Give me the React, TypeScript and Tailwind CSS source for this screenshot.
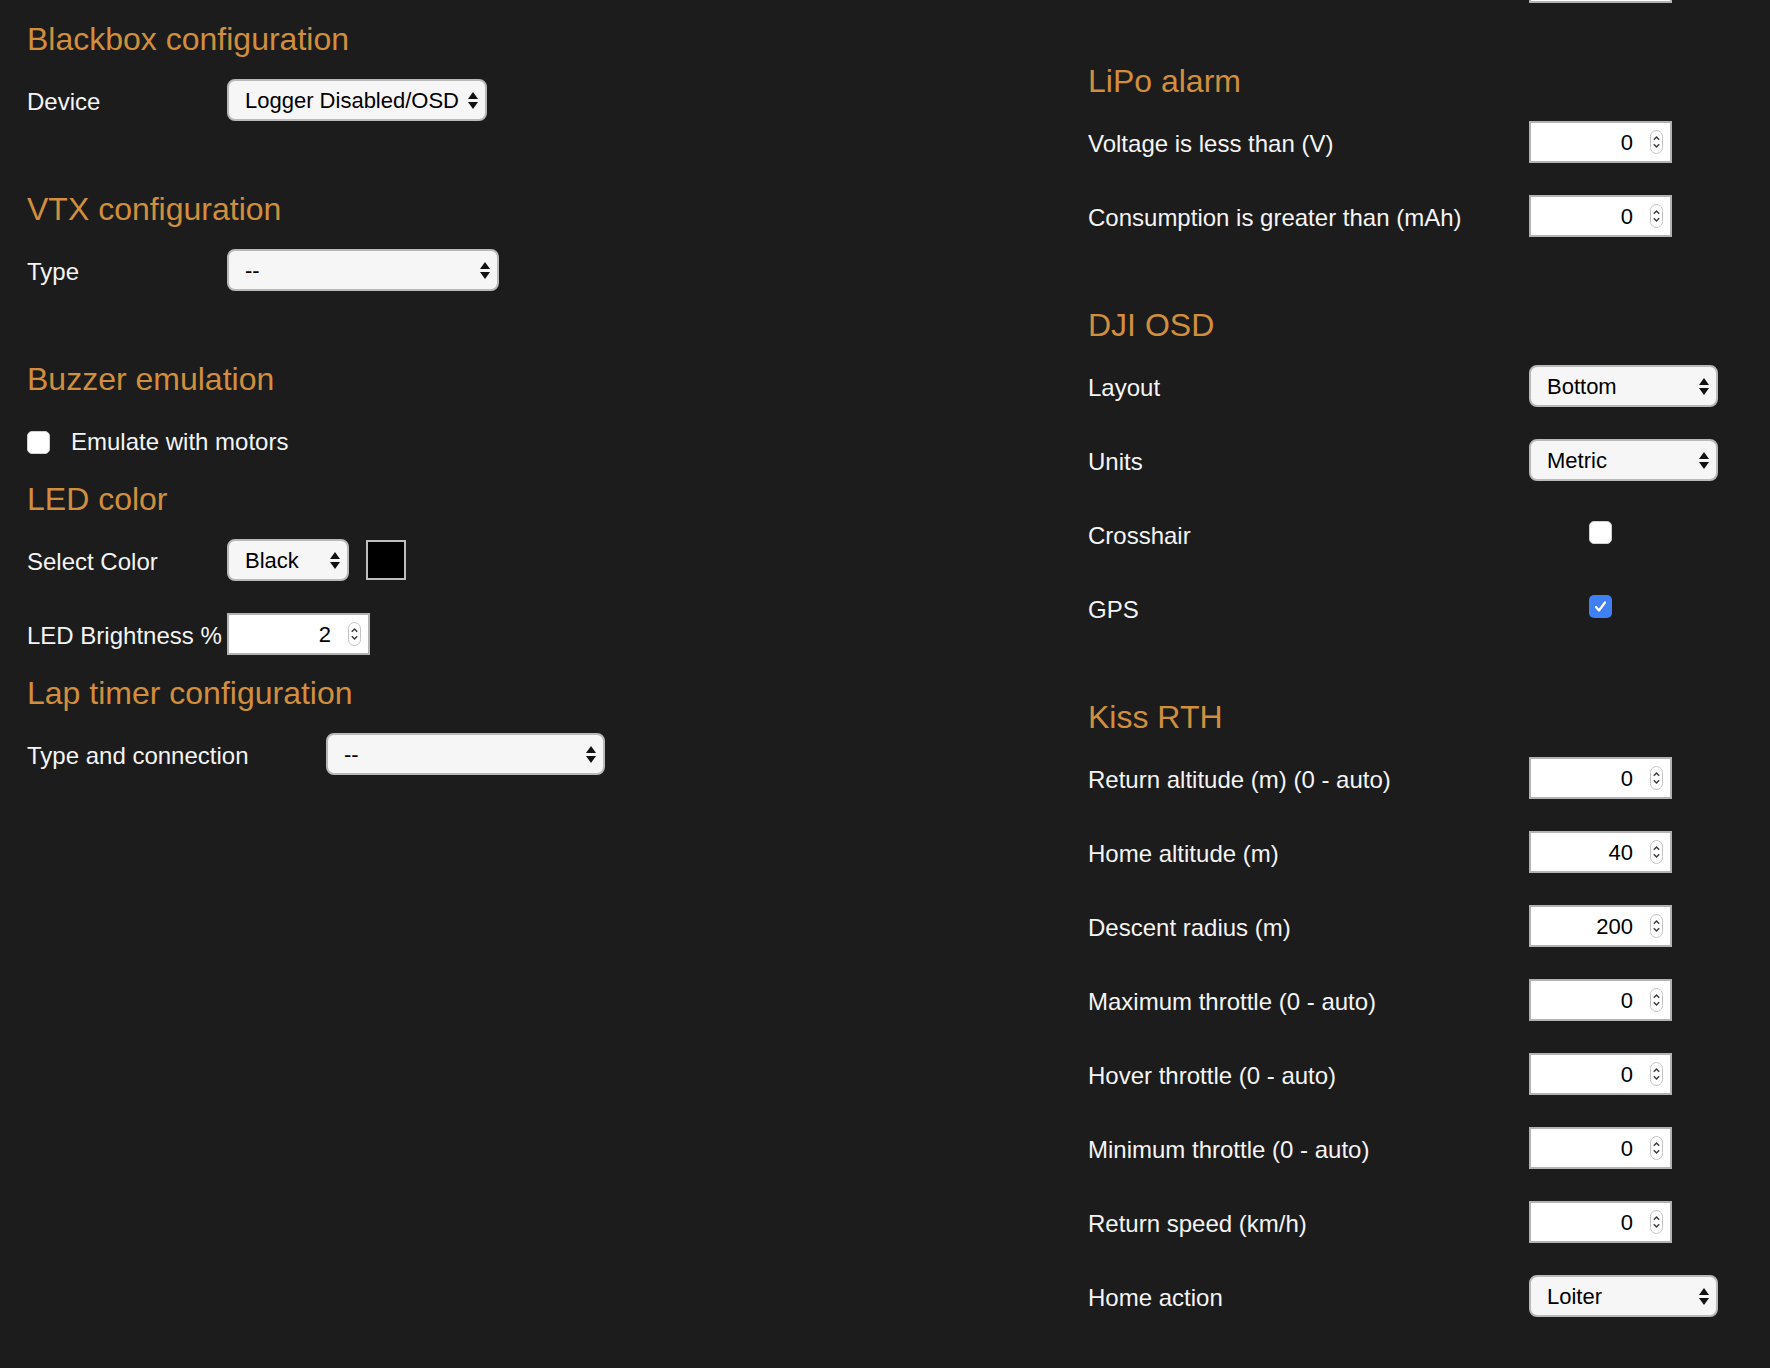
import React from 'react'

const FONT = "font-['Liberation_Sans',Arial,sans-serif]"

type Row =
    | { kind: 'select', label: string, value: string, width: string }
    | { kind: 'number', label: string, value: string }
    | { kind: 'check', label: string, checked: boolean }

const Heading = ({ children }: { children: React.ReactNode }) => (
    <h2 className='text-[32px] leading-[30px] pb-[2px] text-[#d18f3e] font-normal whitespace-nowrap'>
        {children}
    </h2>
)

const SelectArrows = () => (
    <svg width='10' height='17' viewBox='0 0 10 17' className='shrink-0'>
        <path d='M5 0 L10 7 L0 7 Z' fill='#111' />
        <path d='M0 10 L10 10 L5 17 Z' fill='#111' />
    </svg>
)

const Spinner = () => (
    <svg width='13' height='24' viewBox='0 0 13 24' className='shrink-0'>
        <rect x='0.5' y='0.5' width='12' height='23' rx='6' fill='#fff' stroke='#c4c4c4' />
        <path d='M3.8 9.8 L6.5 7 L9.2 9.8' fill='none' stroke='#3a3a3a' strokeWidth='1.4' />
        <path d='M3.8 14.2 L6.5 17 L9.2 14.2' fill='none' stroke='#3a3a3a' strokeWidth='1.4' />
    </svg>
)

const Select = ({ value, width }: { value: string, width: string }) => (
    <div className={`${width} h-[42px] shrink-0 flex items-center justify-between pl-[16px] pr-[7px] bg-[#f6f6f6] border-2 border-[#b9b9b9] rounded-[8px] text-[22px] text-black`}>
        <span className='whitespace-nowrap'>{value}</span>
        <SelectArrows />
    </div>
)

const NumberInput = ({ value }: { value: string }) => (
    <div className='w-[143px] h-[42px] shrink-0 flex items-center justify-end gap-[17px] pr-[7px] bg-white border-2 border-[#b3b3b3] text-[22px] text-black'>
        <span>{value}</span>
        <Spinner />
    </div>
)

const Checkbox = ({ checked }: { checked: boolean }) => (
    checked ? (
        <div className='w-[23px] h-[23px] rounded-[5px] bg-[#3f80f5] flex items-center justify-center'>
            <svg width='15' height='15' viewBox='0 0 15 15'>
                <path d='M3 8 L6 11.5 L12 3.5' fill='none' stroke='#fff' strokeWidth='2.2' strokeLinecap='round' strokeLinejoin='round' />
            </svg>
        </div>
    ) : (
        <div className='w-[23px] h-[23px] rounded-[5px] bg-white border border-[#d0d0d0]' />
    )
)

const RightRow = ({ row }: { row: Row }) => (
    <div className='h-[42px] flex items-center'>
        <div className='w-[441px] pt-[4px] text-[24px] text-[#f4f4f4] whitespace-nowrap'>{row.label}</div>
        {row.kind === 'select' && <Select value={row.value} width={row.width} />}
        {row.kind === 'number' && <NumberInput value={row.value} />}
        {row.kind === 'check' && (
            <div className='w-[143px] flex justify-center -mt-[4px]'>
                <Checkbox checked={row.checked} />
            </div>
        )}
    </div>
)

const RightSection = ({ title, rows, className }: { title: string, rows: Row[], className?: string }) => (
    <section className={className}>
        <Heading>{title}</Heading>
        <div className='mt-[23px] flex flex-col gap-[32px]'>
            {rows.map(r => <RightRow key={r.label} row={r} />)}
        </div>
    </section>
)

const lipo: Row[] = [
    { kind: 'number', label: 'Voltage is less than (V)', value: '0' },
    { kind: 'number', label: 'Consumption is greater than (mAh)', value: '0' },
]

const dji: Row[] = [
    { kind: 'select', label: 'Layout', value: 'Bottom', width: 'w-[189px]' },
    { kind: 'select', label: 'Units', value: 'Metric', width: 'w-[189px]' },
    { kind: 'check', label: 'Crosshair', checked: false },
    { kind: 'check', label: 'GPS', checked: true },
]

const kiss: Row[] = [
    { kind: 'number', label: 'Return altitude (m) (0 - auto)', value: '0' },
    { kind: 'number', label: 'Home altitude (m)', value: '40' },
    { kind: 'number', label: 'Descent radius (m)', value: '200' },
    { kind: 'number', label: 'Maximum throttle (0 - auto)', value: '0' },
    { kind: 'number', label: 'Hover throttle (0 - auto)', value: '0' },
    { kind: 'number', label: 'Minimum throttle (0 - auto)', value: '0' },
    { kind: 'number', label: 'Return speed (km/h)', value: '0' },
    { kind: 'select', label: 'Home action', value: 'Loiter', width: 'w-[189px]' },
]

const Label = ({ children, width = 'w-[200px]' }: { children: React.ReactNode, width?: string }) => (
    <div className={`${width} shrink-0 pt-[4px] text-[24px] text-[#f4f4f4] whitespace-nowrap`}>{children}</div>
)

export default function App() {
    return (
        <div className={`${FONT} h-[1368px] overflow-hidden bg-[#1c1c1c] flex pl-[27px]`}>
            {/* left column */}
            <div className='w-[1061px] shrink-0 pt-[24px]'>
                <Heading>Blackbox configuration</Heading>
                <div className='mt-[23px] h-[42px] flex items-center'>
                    <Label>Device</Label>
                    <Select value='Logger Disabled/OSD' width='w-[260px]' />
                </div>

                <div className='mt-[73px]'>
                    <Heading>VTX configuration</Heading>
                </div>
                <div className='mt-[23px] h-[42px] flex items-center'>
                    <Label>Type</Label>
                    <Select value='--' width='w-[272px]' />
                </div>

                <div className='mt-[73px]'>
                    <Heading>Buzzer emulation</Heading>
                </div>
                <div className='mt-[25px] h-[42px] flex items-center gap-[21px]'>
                    <Checkbox checked={false} />
                    <span className='text-[24px] text-[#f4f4f4]'>Emulate with motors</span>
                </div>

                <div className='mt-[21px]'>
                    <Heading>LED color</Heading>
                </div>
                <div className='mt-[23px] h-[42px] flex items-center'>
                    <Label>Select Color</Label>
                    <Select value='Black' width='w-[122px]' />
                    <div className='ml-[17px] w-[40px] h-[40px] bg-black border-2 border-[#bdbdbd]' />
                </div>
                <div className='mt-[32px] h-[42px] flex items-center'>
                    <Label>LED Brightness %</Label>
                    <NumberInput value='2' />
                </div>

                <div className='mt-[23px]'>
                    <Heading>Lap timer configuration</Heading>
                </div>
                <div className='mt-[23px] h-[42px] flex items-center'>
                    <Label width='w-[299px]'>Type and connection</Label>
                    <Select value='--' width='w-[279px]' />
                </div>
            </div>

            {/* right column, scrolled so only the bottom edge of the previous input shows */}
            <div className='flex-1'>
                <div className='-mt-[39px] h-[42px] flex items-center'>
                    <div className='w-[441px]' />
                    <div className='w-[143px] h-[42px] bg-white border-2 border-[#b3b3b3]' />
                </div>
                <RightSection className='mt-[63px]' title='LiPo alarm' rows={lipo} />
                <RightSection className='mt-[73px]' title='DJI OSD' rows={dji} />
                <RightSection className='mt-[73px]' title='Kiss RTH' rows={kiss} />
            </div>
        </div>
    )
}
